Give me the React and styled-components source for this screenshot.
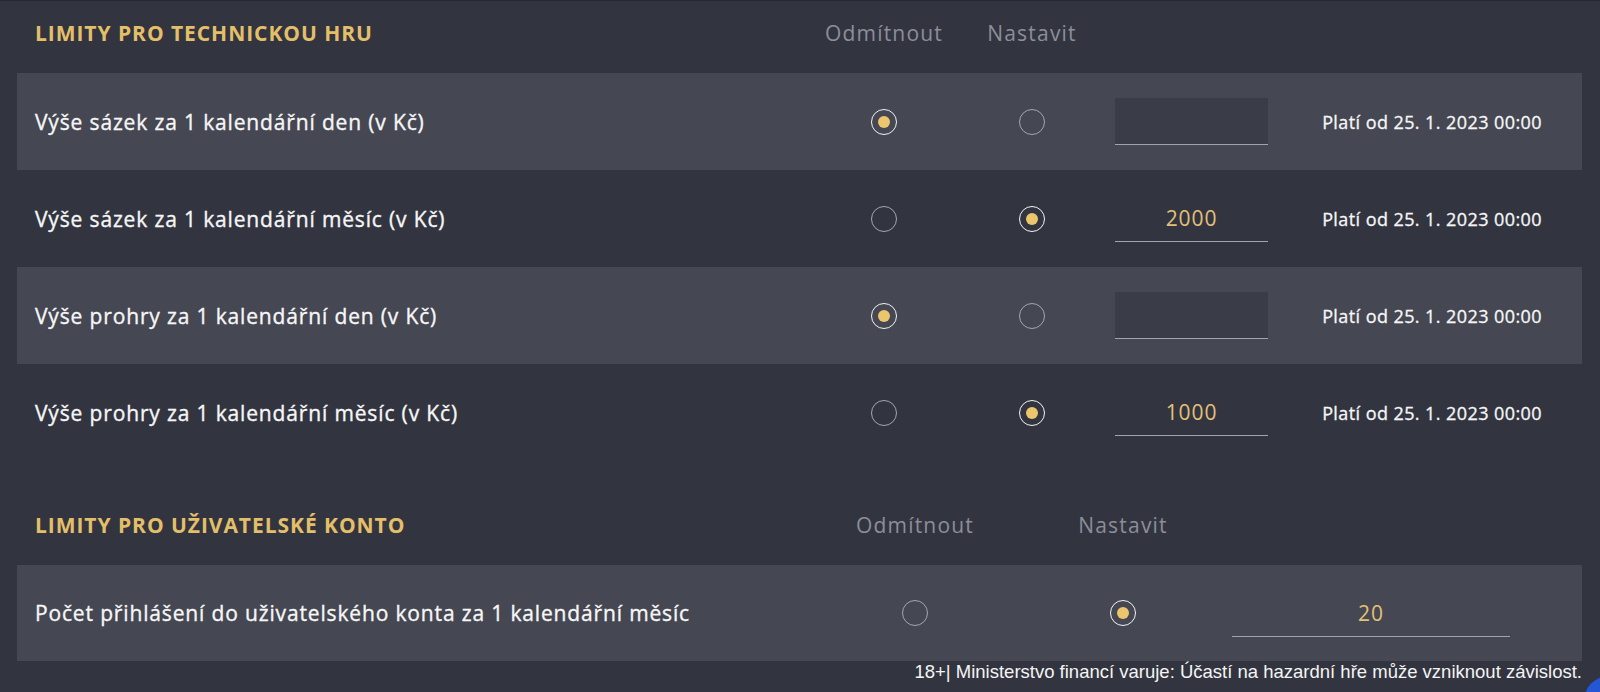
import React from "react";
import styled, { createGlobalStyle } from "styled-components";

const Global = createGlobalStyle`
  html, body { margin: 0; padding: 0; background: #323540; }
  body { font-family: "Open Sans", "Noto Sans", sans-serif; color: #f2f2f2; overflow: hidden; }
  * { box-sizing: border-box; }
`;

const Page = styled.div`
  position: relative;
  width: 1600px;
  height: 692px;
  background: #323540;
  border-top: 1px solid #262830;
  padding: 0 18px 0 17px;
  overflow: hidden;
`;

const Section = styled.section`
  margin-top: ${(p) => p.$gap || 0}px;
`;

const gridFor = (v) =>
  v === "account"
    ? "1fr 208px 208px 283px"
    : "1fr 148px 148px 162px 314px";

const HeaderRow = styled.div`
  display: grid;
  grid-template-columns: ${(p) => gridFor(p.$variant)};
  align-items: center;
  height: 72px;
  padding: 0 ${(p) => (p.$variant === "account" ? 72 : 0)}px 9px 18px;
`;

const Title = styled.h2`
  margin: 0;
  font-size: 21px;
  font-weight: 700;
  color: #e4bf69;
  letter-spacing: 0.95px;
  white-space: nowrap;
`;

const ColHead = styled.div`
  justify-self: center;
  font-size: 21px;
  font-weight: 400;
  letter-spacing: 1.2px;
  color: #8c8e98;
  white-space: nowrap;
`;

const Row = styled.div`
  display: grid;
  grid-template-columns: ${(p) => gridFor(p.$variant)};
  align-items: center;
  height: ${(p) => (p.$variant === "account" ? 96 : 97)}px;
  padding: 0 ${(p) => (p.$variant === "account" ? 72 : 0)}px 0 18px;
  background: ${(p) => (p.$shaded ? "#454752" : "transparent")};
`;

const Label = styled.div`
  font-size: 21px;
  font-weight: 500;
  letter-spacing: 0.85px;
  color: #f6f6f6;
  -webkit-text-stroke: 0.35px #f6f6f6;
  white-space: nowrap;
`;

const RadioCell = styled.div`
  justify-self: center;
  width: 26px;
  height: 26px;
  border-radius: 50%;
  border: 1.5px solid ${(p) => (p.$on ? "#f4f4f4" : "#a4a6ae")};
  display: flex;
  align-items: center;
  justify-content: center;
  &::after {
    content: "";
    display: ${(p) => (p.$on ? "block" : "none")};
    width: 12px;
    height: 12px;
    border-radius: 50%;
    background: #ecc66c;
  }
`;

const Field = styled.div`
  justify-self: end;
  width: ${(p) => p.$w}px;
  height: 47px;
  background: ${(p) => (p.$empty ? "#3a3c47" : "transparent")};
  border-bottom: 1px solid #a2a4ac;
  display: flex;
  align-items: center;
  justify-content: center;
  font-size: 21px;
  letter-spacing: 0.9px;
  color: #e3c178;
`;

const Since = styled.div`
  justify-self: end;
  padding-right: 40px;
  font-size: 18px;
  font-weight: 500;
  letter-spacing: 0.42px;
  color: #f6f6f6;
  -webkit-text-stroke: 0.3px #f6f6f6;
  white-space: nowrap;
`;

const Footer = styled.div`
  text-align: right;
  font-family: "Liberation Sans", Arial, sans-serif;
  font-size: 18.5px;
  line-height: 21px;
  color: #f4f4f4;
  margin-top: 0;
  white-space: nowrap;
`;

const Bubble = styled.div`
  position: absolute;
  right: -34px;
  bottom: -34px;
  width: 50px;
  height: 50px;
  border-radius: 50%;
  background: #2457d6;
`;

const tech = [
  { label: "Výše sázek za 1 kalendářní den (v Kč)", on: 0, value: "" },
  { label: "Výše sázek za 1 kalendářní měsíc (v Kč)", on: 1, value: "2000" },
  { label: "Výše prohry za 1 kalendářní den (v Kč)", on: 0, value: "" },
  { label: "Výše prohry za 1 kalendářní měsíc (v Kč)", on: 1, value: "1000" },
];

export default function App() {
  return (
    <>
      <Global />
      <Page>
        <Section>
          <HeaderRow>
            <Title>LIMITY PRO TECHNICKOU HRU</Title>
            <ColHead>Odmítnout</ColHead>
            <ColHead>Nastavit</ColHead>
          </HeaderRow>
          {tech.map((r, i) => (
            <Row key={r.label} $shaded={i % 2 === 0}>
              <Label>{r.label}</Label>
              <RadioCell $on={r.on === 0} />
              <RadioCell $on={r.on === 1} />
              <Field $w={153} $empty={!r.value}>{r.value}</Field>
              <Since>Platí od 25. 1. 2023 00:00</Since>
            </Row>
          ))}
        </Section>
        <Section $gap={32}>
          <HeaderRow $variant="account">
            <Title>LIMITY PRO UŽIVATELSKÉ KONTO</Title>
            <ColHead>Odmítnout</ColHead>
            <ColHead>Nastavit</ColHead>
          </HeaderRow>
          <Row $variant="account" $shaded>
            <Label>Počet přihlášení do uživatelského konta za 1 kalendářní měsíc</Label>
            <RadioCell />
            <RadioCell $on />
            <Field $w={278}>20</Field>
          </Row>
        </Section>
        <Footer>18+| Ministerstvo financí varuje: Účastí na hazardní hře může vzniknout závislost.</Footer>
        <Bubble />
      </Page>
    </>
  );
}
